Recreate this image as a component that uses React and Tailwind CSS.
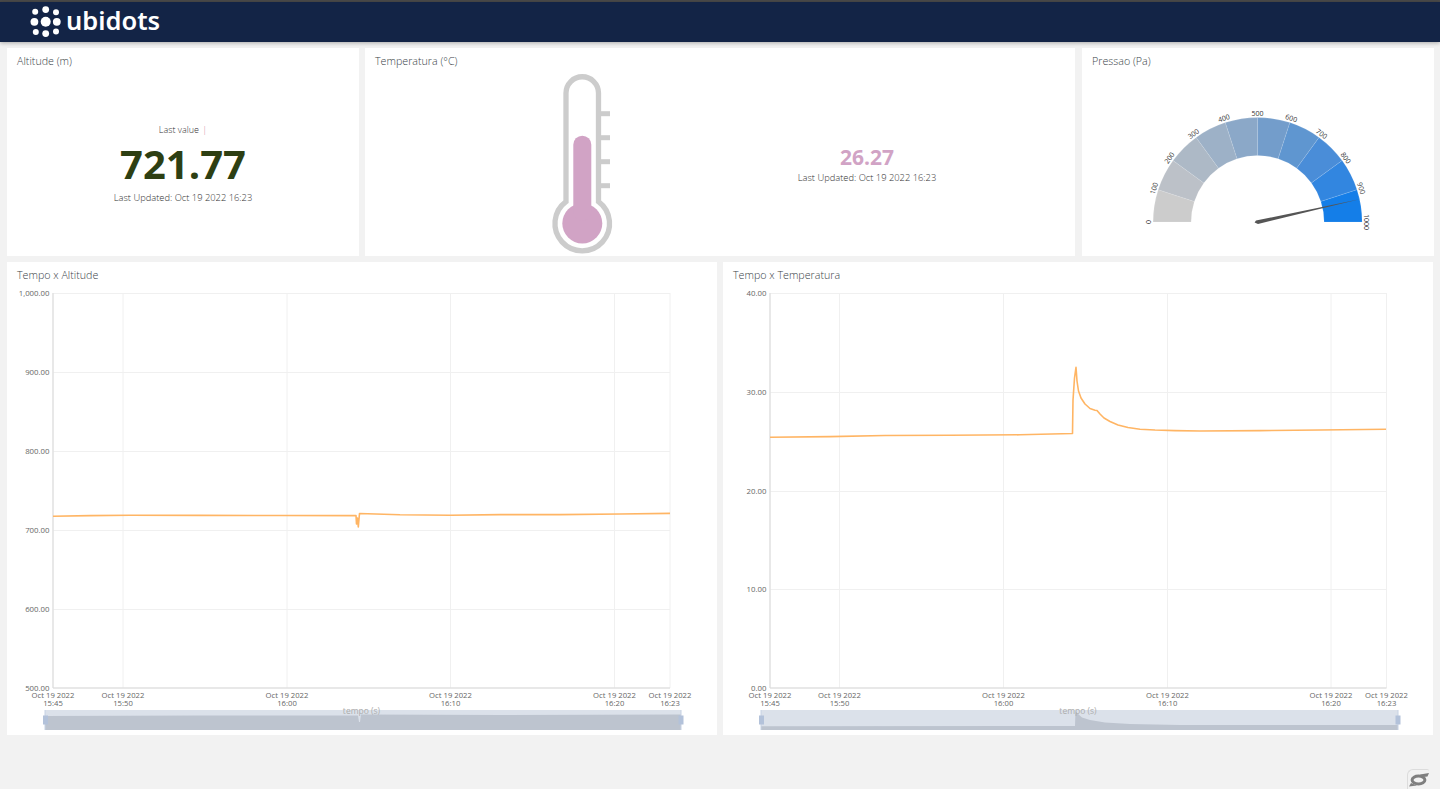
const LINE = '#ffb564';
const FONT = '"Open Sans", sans-serif';

function Card({ title, className, children }) {
  return (
    <div className={`bg-white flex flex-col min-w-0 ${className}`}>
      <div className="h-[26px] shrink-0 pl-[10px] pt-[5px] text-[10.7px] leading-[16px] font-light text-[#3a3f48]">{title}</div>
      {children}
    </div>
  );
}

function LastUpdated() {
  return <div className="whitespace-nowrap text-[9.35px] leading-[14px] font-light text-[#333]">Last Updated: Oct 19 2022 16:23</div>;
}

function Logo() {
  const dots = [
    [45.7, 21.8, 5], [34.4, 21.8, 3.9], [56.8, 21.8, 3.9],
    [35.2, 11.7, 3], [45.7, 9.6, 3.4], [56, 12.2, 3],
    [35.8, 32, 3], [45.7, 33.6, 3.4], [56, 31.6, 3],
  ];
  return (
    <svg width="32" height="32" viewBox="30 6 32 32" className="block">
      {dots.map((d, i) => <circle key={i} cx={d[0]} cy={d[1]} r={d[2]} fill="#fff" />)}
    </svg>
  );
}

function Thermometer() {
  return (
    <svg width="70" height="182" viewBox="547 74 70 182" className="block shrink-0">
      <path d="M566 201.6 V93 A16.25 16.25 0 0 1 598.5 93 V201.6 A27.3 27.3 0 1 1 566 201.6 Z" fill="#fff" stroke="#cccccc" strokeWidth="5.3" />
      {[113.7, 137.7, 161.7, 185.7].map(y => <rect key={y} x="600" y={y - 2.5} width="10" height="5" fill="#cccccc" />)}
      <circle cx="582.3" cy="223.4" r="20" fill="#d1a3c5" />
      <rect x="573.3" y="135.7" width="18" height="85" rx="9" fill="#d1a3c5" />
    </svg>
  );
}

function Gauge() {
  const cx = 1257.6, cy = 222, R = 104.5, r = 66.5;
  const cols = ['#cccccc', '#bcc1c8', '#adb9c6', '#9db1c7', '#8ba8c8', '#739dcb', '#5f96d0', '#4a8dd8', '#3286e0', '#147ee8'];
  const pt = (a, rad) => [cx - rad * Math.cos(a), cy - rad * Math.sin(a)];
  return (
    <svg width="240" height="126" viewBox="1138 106 240 126" className="block">
      {cols.map((c, i) => {
        const a0 = (i / 10) * Math.PI, a1 = ((i + 1) / 10) * Math.PI;
        const [x0, y0] = pt(a0, R), [x1, y1] = pt(a1, R), [x2, y2] = pt(a1, r), [x3, y3] = pt(a0, r);
        return <path key={i} d={`M${x0} ${y0} A${R} ${R} 0 0 1 ${x1} ${y1} L${x2} ${y2} A${r} ${r} 0 0 0 ${x3} ${y3} Z`} fill={c} stroke="#fff" strokeWidth="0.2" strokeOpacity="0.6" />;
      })}
      {Array.from({ length: 11 }, (_, i) => {
        const a = (i / 10) * Math.PI;
        const [x, y] = pt(a, R + 4.5);
        const deg = -90 + i * 18;
        return (
          <text key={i} x={x} y={y} transform={`rotate(${deg} ${x} ${y})`} textAnchor="middle" dominantBaseline="central" fontSize="7" fontWeight="500" fill="#333" fontFamily={FONT}>
            {i * 100}
          </text>
        );
      })}
      <path d="M1359.5 199.3 L1256 220.6 L1254.6 222.4 L1258 224 Z" fill="#555" />
    </svg>
  );
}

function Chart({ ox, x0, x1, ticks, yTicks, line, sliderX0, sliderX1, area, tempoX }) {
  return (
    <svg width="710" height="473" viewBox={`${ox} 262 710 473`} className="block absolute inset-0" fontFamily={FONT}>
      {yTicks.map(([y]) => <line key={y} x1={x0} x2={x1} y1={y} y2={y} stroke="#f0f0f0" />)}
      {ticks.map(([x]) => <line key={x} x1={x} x2={x} y1="293" y2="688" stroke="#f0f0f0" />)}
      <line x1={x0} x2={x0} y1="293" y2="688" stroke="#d9d9d9" />
      <line x1={x0} x2={x1} y1="688" y2="688" stroke="#d9d9d9" />
      {yTicks.map(([y, l]) => (
        <text key={y} x={x0 - 3.5} y={y + 2.5} textAnchor="end" fontSize="7.8" fill="#666">{l}</text>
      ))}
      {ticks.map(([x, t]) => (
        <text key={x} textAnchor="middle" fontSize="7.7" fill="#666">
          <tspan x={x} y="698">Oct 19 2022</tspan>
          <tspan x={x} y="706">{t}</tspan>
        </text>
      ))}
      <path d={line} fill="none" stroke={LINE} strokeWidth="1.6" strokeLinejoin="round" />
      <rect x={sliderX0} y="710" width={sliderX1 - sliderX0} height="20" fill="#dbe1ea" />
      <path d={area} fill="#bdc4cf" />
      <line x1={sliderX0} x2={sliderX0} y1="710" y2="730" stroke="#c6d2e4" />
      <line x1={sliderX1} x2={sliderX1} y1="710" y2="730" stroke="#c6d2e4" />
      <rect x={sliderX0 - 2} y="715.5" width="5" height="9" fill="#b3c2da" />
      <rect x={sliderX1 - 2.5} y="715.5" width="5" height="9" fill="#b3c2da" />
      <text x={tempoX} y="713.5" textAnchor="middle" fontSize="8.5" fill="#adadad">tempo (s)</text>
    </svg>
  );
}

const xTicks1 = [[53, '15:45'], [123, '15:50'], [287, '16:00'], [450.5, '16:10'], [614.5, '16:20'], [670, '16:23']];
const xTicks2 = [[770, '15:45'], [839.5, '15:50'], [1003.5, '16:00'], [1167.5, '16:10'], [1331, '16:20'], [1386.5, '16:23']];
const yT1 = [[293.5, '1,000.00'], [372.5, '900.00'], [451.5, '800.00'], [530.5, '700.00'], [609.5, '600.00'], [688, '500.00']];
const yT2 = [[293.5, '40.00'], [392.5, '30.00'], [491.5, '20.00'], [589.5, '10.00'], [688, '0.00']];

const line1 = 'M53 516.2 L90 515.6 L130 515.2 L200 515.4 L280 515.5 L356 515.6 L356.5 524 L357.5 518 L358.3 527 L359.5 513.5 L400 514.8 L450 515.2 L500 514.6 L560 514.6 L620 514 L670 513.4';
const line2 = 'M770 437.3 L830 436.6 L885 435.5 L950 435.3 L1020 434.8 L1072.5 433.5 L1073 400 L1074.5 378 L1076 367.3 L1077 381 L1078.5 391 L1081 398 L1085 404 L1090 408.5 L1095 410.2 L1097 410.5 L1100 414 L1104 418 L1110 421.5 L1118 425 L1128 427.5 L1140 429.2 L1155 430 L1175 430.6 L1200 431 L1260 430.6 L1320 430 L1386 429.3';
const area1 = 'M45 716 L200 715.5 L358 715.5 L359 722 L360 722 L361 714.5 L500 715 L681 714.5 V730 H45 Z';
const area2 = 'M761 726.3 L1075 726 L1075.5 711 L1077 713 L1082 717.5 L1090 720 L1105 722.5 L1130 724 L1180 725 L1398 725 V730 H761 Z';

export default function App() {
  return (
    <div className="relative w-full h-[789px] overflow-hidden bg-[#f2f2f2] text-[#333]" style={{ fontFamily: FONT }}>
      <div className="h-[2px] bg-[#4a4a4a]" />
      <header className="h-[40px] bg-[#132446] flex items-center pl-[30px] gap-[4px] shadow-[0_1px_4px_rgba(0,0,0,0.3)]">
        <Logo />
        <span className="text-white text-[25.5px] leading-none font-semibold -mt-[2px]" style={{ fontFamily: '"Noto Sans", sans-serif' }}>ubidots</span>
      </header>

      <main className="pl-[7px] pr-[6px] pt-[6px] flex flex-col gap-[6px]">
        <section className="flex gap-[6px] h-[208px]">
          <Card title="Altitude (m)" className="w-[352px]">
            <div className="flex flex-col items-center pt-[50px]">
              <div className="text-[9px] leading-[12px] font-light text-[#333]">Last value <span className="text-[#d08a98] ml-[1px]">|</span></div>
              <div className="text-[40px] leading-[44px] font-bold text-[#2d3f13] mt-[6px]">721.77</div>
              <div className="mt-[5px]"><LastUpdated /></div>
            </div>
          </Card>
          <Card title="Temperatura (°C)" className="w-[710px]">
            <div className="flex">
              <div className="ml-[182px]"><Thermometer /></div>
              <div className="ml-[180px] w-[140px] flex flex-col items-center pt-[69px]">
                <div className="text-[21px] leading-[28px] font-bold text-[#d1a3c5]">26.27</div>
                <LastUpdated />
              </div>
            </div>
          </Card>
          <Card title="Pressao (Pa)" className="w-[352px] ml-[1px]">
            <div className="pl-[56px] pt-[32px]"><Gauge /></div>
          </Card>
        </section>

        <section className="flex gap-[6px] h-[473px]">
          <div className="relative w-[710px] bg-white">
            <Chart ox={7} x0={53} x1={670} ticks={xTicks1} yTicks={yT1} line={line1} sliderX0={45} sliderX1={681} area={area1} tempoX={361.5} />
            <div className="relative pl-[10px] pt-[5px] text-[10.7px] leading-[16px] font-light text-[#3a3f48]">Tempo x Altitude</div>
          </div>
          <div className="relative w-[710px] bg-white">
            <Chart ox={723} x0={770} x1={1386.5} ticks={xTicks2} yTicks={yT2} line={line2} sliderX0={761} sliderX1={1398} area={area2} tempoX={1078} />
            <div className="relative pl-[10px] pt-[5px] text-[10.7px] leading-[16px] font-light text-[#3a3f48]">Tempo x Temperatura</div>
          </div>
        </section>
      </main>

      <button className="absolute right-[11px] bottom-0 w-[22px] h-[20px] rounded-tl-[6px] rounded-tr-[2px] bg-[#f2f2f2] border-t border-l border-[#dcdcdc] flex items-center justify-center">
        <svg width="21" height="15" viewBox="0 0 21 15">
          <ellipse cx="10.5" cy="8" rx="6.4" ry="4" fill="none" stroke="#7f7f7f" strokeWidth="3" />
          <path d="M12 2.6 L21 1 L19.5 4.5 L15.5 5 Z" fill="#7f7f7f" />
          <path d="M9 13.4 L1 14.5 L3 11 Z" fill="#7f7f7f" />
        </svg>
      </button>
    </div>
  );
}
